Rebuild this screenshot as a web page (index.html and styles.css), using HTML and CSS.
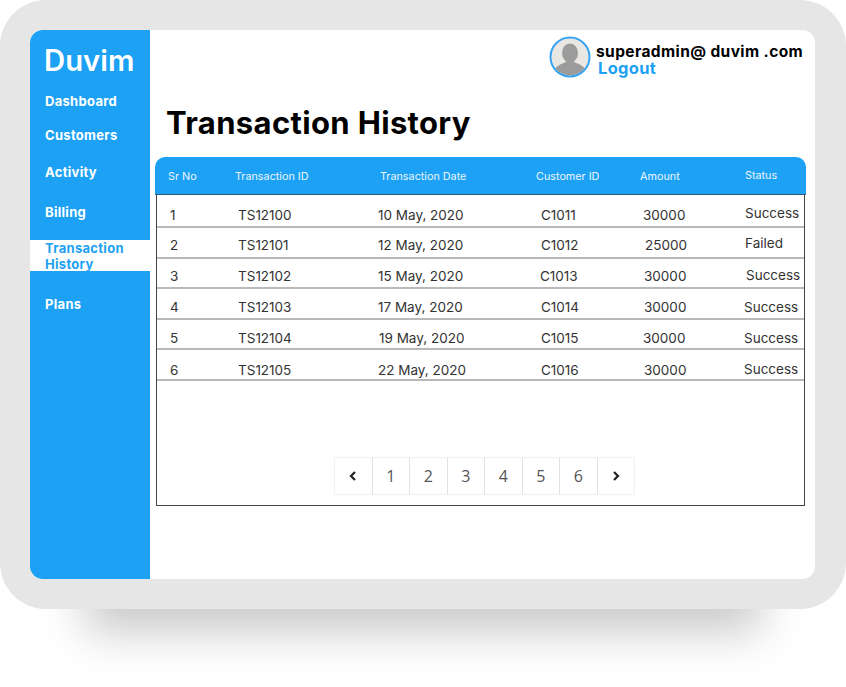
FILE: index.html
```html
<!DOCTYPE html>
<html lang="en">
<head>
<meta charset="utf-8">
<title>Duvim - Transaction History</title>
<link rel="stylesheet" href="styles.css">
</head>
<body>
<div class="device">
  <div class="screen">
    <aside class="sidebar">
      <div class="logo">Duvim</div>
      <nav class="nav">
        <a class="nav-item">Dashboard</a>
        <a class="nav-item">Customers</a>
        <a class="nav-item">Activity</a>
        <a class="nav-item">Billing</a>
        <a class="nav-item active">Transaction<br>History</a>
        <a class="nav-item">Plans</a>
      </nav>
    </aside>
    <main class="main">
      <header class="topbar">
        <svg class="avatar" viewBox="0 0 42 42" aria-hidden="true">
          <defs><clipPath id="av"><circle cx="21" cy="21" r="18.5"/></clipPath></defs>
          <circle cx="21" cy="21" r="19.5" fill="#e9e7e3" stroke="#35a3f3" stroke-width="2"/>
          <g clip-path="url(#av)" fill="#9b9b9b">
            <ellipse cx="21" cy="17" rx="8" ry="9.5"/>
            <path d="M4 40c0-8 5-11 11-13l3-2h6l3 2c6 2 11 5 11 13z"/>
          </g>
        </svg>
        <div class="user">
          <div class="email">superadmin@ duvim .com</div>
          <a class="logout">Logout</a>
        </div>
      </header>
      <h1 class="title">Transaction History</h1>
      <section class="table">
        <div class="head">
          <span>Sr No</span><span>Transaction ID</span><span>Transaction Date</span><span>Customer ID</span><span>Amount</span><span class="head-status">Status</span>
        </div>
        <div class="table-body">
          <div class="row row-first"><span>1</span><span>TS12100</span><span>10 May, 2020</span><span>C1011</span><span>30000</span><span class="status up2">Success</span></div>
          <div class="row"><span>2</span><span>TS12101</span><span>12 May, 2020</span><span>C1012</span><span class="right2">25000</span><span class="status up2">Failed</span></div>
          <div class="row"><span>3</span><span>TS12102</span><span>15 May, 2020</span><span class="left1">C1013</span><span class="right1">30000</span><span class="status up1 right1">Success</span></div>
          <div class="row row-low"><span>4</span><span>TS12103</span><span>17 May, 2020</span><span>C1014</span><span class="right1">30000</span><span class="status left1">Success</span></div>
          <div class="row row-low"><span>5</span><span>TS12104</span><span class="right1">19 May, 2020</span><span>C1015</span><span>30000</span><span class="status left1">Success</span></div>
          <div class="row row-last"><span>6</span><span>TS12105</span><span>22 May, 2020</span><span>C1016</span><span class="right1">30000</span><span class="status up1 left1">Success</span></div>
          <div class="pager">
            <a class="page"><svg class="chev" viewBox="0 0 10 12"><path d="M7 2 3 6l4 4"/></svg></a>
            <a class="page">1</a><a class="page">2</a><a class="page">3</a><a class="page">4</a><a class="page">5</a><a class="page">6</a>
            <a class="page"><svg class="chev" viewBox="0 0 10 12"><path d="M3 2l4 4-4 4"/></svg></a>
          </div>
        </div>
      </section>
    </main>
  </div>
</div>
</body>
</html>
```
FILE: styles.css
```css
* { box-sizing: border-box; }
html, body { margin: 0; background: #fff; }
body { width: 846px; height: 687px; overflow: hidden; font-family: "Inter", "Liberation Sans", sans-serif; }

.device {
  width: 846px; height: 609px; padding: 30px 31px 30px 30px;
  background: #e6e6e6; border-radius: 46px;
  box-shadow: 0 108px 42px -85px rgba(0,0,0,.21);
}
.screen { display: flex; height: 549px; background: #fff; border-radius: 13px; overflow: hidden; }

.sidebar { width: 119.5px; background: #1da1f5; color: #fff; flex: none; }
.logo { height: 62px; padding: 13px 0 0 14px; font-size: 29.3px; line-height: 36px; font-weight: 600; }
.nav { display: grid; grid-template-rows: 18px 50px 24px 56px 31px 66px; }
.nav-item { display: flex; align-items: center; padding-left: 15px; font-size: 13px; line-height: 16px; font-weight: 700; letter-spacing: .3px; }
.nav-item.active { background: #fff; color: #1da1f5; }

.main { flex: 1; padding: 0 9px 0 5.5px; min-width: 0; }
.topbar { display: flex; justify-content: flex-end; height: 50px; padding-top: 6px; gap: 5px; }
.avatar { width: 42px; height: 42px; flex: none; }
.user { width: 210px; padding-top: 7px; }
.email { font-size: 15.5px; line-height: 17px; font-weight: 700; color: #000; white-space: nowrap; letter-spacing: .4px; }
.logout { display: block; margin-left: 2px; font-size: 16.5px; line-height: 17px; font-weight: 700; color: #1da1f5; letter-spacing: .3px; }

.title { margin: 23px 0 14px 11px; font-size: 31px; line-height: 40px; font-weight: 700; color: #000; letter-spacing: .35px; }

.table { width: 651px; }
.head {
  display: grid; grid-template-columns: 67px 145px 156px 104px 105px 1fr;
  align-items: center; height: 38px; padding: 2px 0 0 13px;
  background: #1da1f5; border-bottom: 1px solid #2b5a7c; border-radius: 10px 10px 0 0;
  font-size: 10.8px; color: #e9f6ff;
}
.head-status { margin-bottom: 3px; }
.table-body { height: 311px; margin: 0 1px; border: 1px solid #444; border-top: 0; }
.row {
  display: grid; grid-template-columns: 68px 140px 163px 102px 102px 1fr;
  align-items: center; height: 30.5px; padding: 6px 0 0 13px;
  font-size: 13.5px; color: #333; border-bottom: 2px solid #b9b9b9;
}
.row-first { height: 33px; padding-top: 8px; }
.row-low { padding-top: 8px; }
.row-last { padding-top: 11px; }
.up1 { margin-bottom: 2px; }
.up2 { margin-bottom: 4px; }
.right1 { margin-left: 1px; }
.right2 { margin-left: 2px; }
.left1 { margin-left: -1px; }

.pager { display: flex; width: 301px; height: 38px; margin: 76px 0 0 177px; border: 1px solid #f1f1f1; }
.page {
  flex: 1; display: flex; align-items: center; justify-content: center;
  font-family: "Open Sans", sans-serif; font-size: 16px; color: #555;
  border-left: 1px solid #e2e2e2;
}
.page:first-child { border-left: 0; }
.chev { width: 10px; height: 12px; fill: none; stroke: #222; stroke-width: 2.2; }
```
